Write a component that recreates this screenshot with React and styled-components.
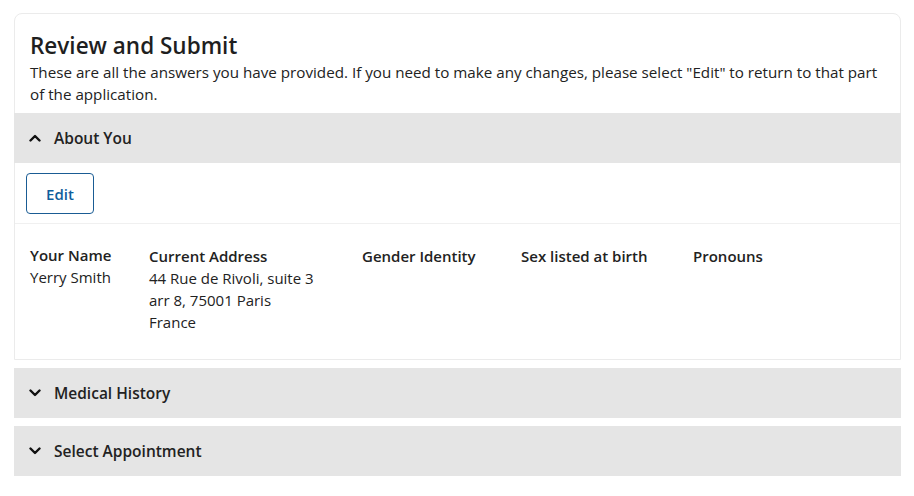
import React from "react";
import styled, { createGlobalStyle } from "styled-components";

const Global = createGlobalStyle`
  html, body { margin: 0; padding: 0; background: #fff; }
  body { font-family: "Open Sans", "Noto Sans", sans-serif; color: #222; }
  * { box-sizing: border-box; }
`;

const Page = styled.div`
  padding: 13px 13px 20px 14px;
  display: flex;
  flex-direction: column;
  gap: 8px;
`;

const Card = styled.section`
  border: 1px solid #ebebeb;
  border-radius: 8px 8px 0 0;
  background: #fff;
`;

const Intro = styled.div`
  padding: 17px 15px 0 15px;
`;

const Title = styled.h2`
  margin: 0;
  font-size: 22.5px;
  line-height: 30px;
  font-weight: 600;
  color: #1f1f1f;
`;

const Lead = styled.p`
  margin: 0 0 8px;
  font-size: 15.2px;
  line-height: 22px;
  color: #222;
`;

const SectionHeader = styled.button`
  display: flex;
  align-items: center;
  gap: 13px;
  width: ${(p) => (p.$inset ? "calc(100% + 2px)" : "100%")};
  margin: ${(p) => (p.$inset ? "0 -1px" : "0")};
  height: 50px;
  padding: 0 15px;
  border: none;
  background: #e5e5e5;
  font-family: inherit;
  font-size: 15.5px;
  font-weight: 600;
  color: #222;
  text-align: left;
  cursor: pointer;
`;

const Chevron = styled.svg`
  width: 12px;
  height: 8px;
  flex: none;
`;

const Actions = styled.div`
  padding: 10px 11px 9px;
  border-bottom: 1px solid #f0f0f0;
`;

const EditButton = styled.button`
  width: 68px;
  height: 41px;
  border: 1px solid #1a5c94;
  border-radius: 4px;
  background: #fff;
  color: #0f5e9c;
  font-family: inherit;
  font-size: 15px;
  font-weight: 600;
  cursor: pointer;
`;

const Fields = styled.dl`
  margin: 0;
  padding: 20px 15px 26px;
  display: grid;
  grid-template-columns: 119px 213px 159px 172px 1fr;
`;

const Field = styled.div`
  display: flex;
  flex-direction: column;
  padding-top: ${(p) => (p.$raised ? "0" : "1px")};
`;

const Label = styled.dt`
  font-size: 15px;
  line-height: 22px;
  font-weight: 600;
  color: #222;
`;

const Value = styled.dd`
  margin: 0;
  font-size: 15px;
  line-height: 22px;
  color: #222;
`;

function ChevronIcon({ up }) {
  return (
    <Chevron viewBox="0 0 12 8" aria-hidden="true">
      <polyline
        points={up ? "1.5,6.5 6,2 10.5,6.5" : "1.5,1.5 6,6 10.5,1.5"}
        fill="none"
        stroke="#111"
        strokeWidth="2.4"
        strokeLinecap="round"
        strokeLinejoin="round"
      />
    </Chevron>
  );
}

const fields = [
  { label: "Your Name", value: ["Yerry Smith"], raised: true },
  {
    label: "Current Address",
    value: ["44 Rue de Rivoli, suite 3", "arr 8, 75001 Paris", "France"],
  },
  { label: "Gender Identity", value: [] },
  { label: "Sex listed at birth", value: [] },
  { label: "Pronouns", value: [] },
];

export default function App() {
  return (
    <>
      <Global />
      <Page>
        <Card>
          <Intro>
            <Title>Review and Submit</Title>
            <Lead>
              These are all the answers you have provided. If you need to make
              any changes, please select "Edit" to return to that part of the
              application.
            </Lead>
          </Intro>
          <SectionHeader $inset>
            <ChevronIcon up />
            About You
          </SectionHeader>
          <Actions>
            <EditButton>Edit</EditButton>
          </Actions>
          <Fields>
            {fields.map((f) => (
              <Field key={f.label} $raised={f.raised}>
                <Label>{f.label}</Label>
                {f.value.map((line) => (
                  <Value key={line}>{line}</Value>
                ))}
              </Field>
            ))}
          </Fields>
        </Card>
        <SectionHeader>
          <ChevronIcon />
          Medical History
        </SectionHeader>
        <SectionHeader>
          <ChevronIcon />
          Select Appointment
        </SectionHeader>
      </Page>
    </>
  );
}
